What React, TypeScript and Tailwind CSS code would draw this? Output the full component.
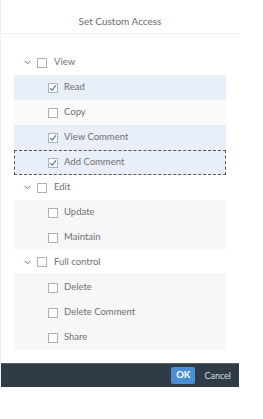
import React from 'react';

interface Row {
  label: string;
  level: 0 | 1;
  checked?: boolean;
  bg?: string;
  focused?: boolean;
  divider?: boolean;
}

const rows: Row[] = [
  { label: 'View', level: 0 },
  { label: 'Read', level: 1, checked: true, bg: 'bg-[#e9eff8]' },
  { label: 'Copy', level: 1, bg: 'bg-[#fafafa]' },
  { label: 'View Comment', level: 1, checked: true, bg: 'bg-[#e9eff8]' },
  { label: 'Add Comment', level: 1, checked: true, bg: 'bg-[#e9eff8]', focused: true },
  { label: 'Edit', level: 0 },
  { label: 'Update', level: 1, bg: 'bg-[#f7f7f7]' },
  { label: 'Maintain', level: 1, bg: 'bg-[#f7f7f7]' },
  { label: 'Full control', level: 0, divider: true },
  { label: 'Delete', level: 1, bg: 'bg-[#f7f7f7]' },
  { label: 'Delete Comment', level: 1, bg: 'bg-[#f7f7f7]' },
  { label: 'Share', level: 1, bg: 'bg-[#f7f7f7]' },
];

function Checkbox({ checked }: { checked?: boolean }) {
  return (
    <span className="w-[10px] h-[10px] border border-[#b0b0b0] bg-white flex items-center justify-center flex-shrink-0">
      {checked && (
        <svg width="8" height="8" viewBox="0 0 8 8">
          <path d="M1.2 4.2 L3.2 6.2 L6.9 1.4" fill="none" stroke="#3b79c4" strokeWidth="1.1" />
        </svg>
      )}
    </span>
  );
}

function Chevron() {
  return (
    <svg width="7" height="5" viewBox="0 0 7 5" className="flex-shrink-0">
      <path d="M0.7 0.9 L3.5 3.8 L6.3 0.9" fill="none" stroke="#4a74a8" strokeWidth="1" />
    </svg>
  );
}

export default function App() {
  return (
    <div className="w-[263px] h-[419px] bg-white" style={{ fontFamily: 'Lato, "Open Sans", sans-serif' }}>
      <div className="w-[239px] border-l border-[#f0f0f0]">
        {/* Header */}
        <div className="h-[34px] flex items-center justify-center border-b border-[#eeeeee]">
          <span className="text-[10px] text-[#6a6a6a] pt-[10px]">Set Custom Access</span>
        </div>

        {/* Tree list */}
        <div className="pt-[16px] pl-[13px] pr-[13px] h-[329px]">
          {rows.map((r) => (
            <div
              key={r.label}
              className={`h-[25px] flex items-center ${r.bg ?? 'bg-white'} ${
                r.focused ? 'border border-dashed border-[#555]' : ''
              } ${r.divider ? 'border-b border-[#eeeeee]' : ''}`}
            >
              {r.level === 0 ? (
                <div className="flex items-center pl-[10px]">
                  <Chevron />
                  <span className="ml-[6px]">
                    <Checkbox checked={r.checked} />
                  </span>
                  <span className="ml-[7px] text-[9.5px] text-[#707070]">{r.label}</span>
                </div>
              ) : (
                <div className={`flex items-center ${r.focused ? 'pl-[33px]' : 'pl-[34px]'}`}>
                  <Checkbox checked={r.checked} />
                  <span className="ml-[6px] text-[9.5px] text-[#707070]">{r.label}</span>
                </div>
              )}
            </div>
          ))}
        </div>

        {/* Footer */}
        <div className="h-[24px] bg-[#2f3b47] border-t border-[#56616b] flex items-center justify-end pr-[8px]">
          <button className="h-[17px] px-[5px] bg-[#4a8fd3] text-white text-[9.5px] font-bold rounded-[2px]">
            OK
          </button>
          <span className="ml-[9px] text-[9px] text-[#d8dde2]">Cancel</span>
        </div>
      </div>
    </div>
  );
}
